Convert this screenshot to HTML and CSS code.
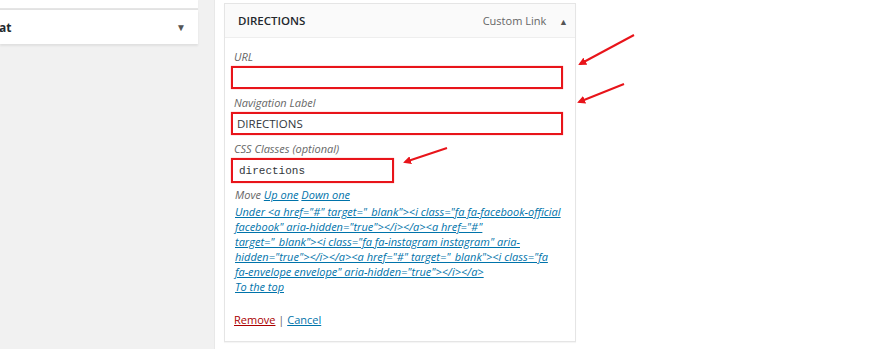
FILE: index.html
```html
<!DOCTYPE html>
<html>
<head>
	<meta charset="utf-8">
	<title>Menu item - Directions</title>
	<link rel="stylesheet" href="styles.css">
</head>
<body>
	<div class="page">
		<div class="side">
			<div class="box box-top"></div>
			<div class="box box-item">
				<span class="box-title">at</span>
				<span class="toggle">&#9660;</span>
			</div>
		</div>

		<div class="main">
			<div class="item">
				<div class="item-head">
					<span class="item-title">DIRECTIONS</span>
					<span class="item-type">Custom Link <span class="toggle up">&#9650;</span></span>
				</div>
				<div class="item-body">
					<label class="field">
						<span class="field-label">URL</span>
						<input class="mark wide" type="text" value="">
					</label>
					<label class="field">
						<span class="field-label">Navigation Label</span>
						<input class="mark wide" type="text" value="DIRECTIONS">
					</label>
					<label class="field">
						<span class="field-label">CSS Classes (optional)</span>
						<input class="mark short code" type="text" value="directions">
					</label>

					<div class="move">
						<div class="move-row">Move <a href="#">Up one</a> <a href="#">Down one</a></div>
						<a href="#" class="under">Under &lt;a href="#" target="_blank"&gt;&lt;i class="fa fa-facebook-official<br>facebook" aria-hidden="true"&gt;&lt;/i&gt;&lt;/a&gt;&lt;a href="#"<br>target="_blank"&gt;&lt;i class="fa fa-instagram instagram" aria-<br>hidden="true"&gt;&lt;/i&gt;&lt;/a&gt;&lt;a href="#" target="_blank"&gt;&lt;i class="fa<br>fa-envelope envelope" aria-hidden="true"&gt;&lt;/i&gt;&lt;/a&gt;</a><br>
						<a href="#">To the top</a>
					</div>

					<div class="actions">
						<a href="#" class="remove">Remove</a> | <a href="#">Cancel</a>
					</div>
				</div>
			</div>
		</div>
	</div>

	<!-- red arrows drawn over the screenshot -->
	<svg class="arrows" width="880" height="349" viewBox="0 0 880 349">
		<defs>
			<marker id="head" markerWidth="8" markerHeight="8" refX="6" refY="4" orient="auto" markerUnits="userSpaceOnUse">
				<path d="M0,0 L8,4 L0,8 Z" fill="#e8141a"/>
			</marker>
		</defs>
		<line x1="634" y1="35" x2="580" y2="64" stroke="#e8141a" stroke-width="2" marker-end="url(#head)"/>
		<line x1="624" y1="84" x2="579" y2="102" stroke="#e8141a" stroke-width="2" marker-end="url(#head)"/>
		<line x1="447" y1="148" x2="405" y2="162" stroke="#e8141a" stroke-width="2" marker-end="url(#head)"/>
	</svg>
</body>
</html>
```

FILE: styles.css
```css
body{
	margin: 0;
	background-color: #fff;
	font-family: "Open Sans", "Noto Sans", sans-serif;
	color: #23282d;
}
.page{
	display: flex;
	height: 349px;
}
.side{
	width: 214px;
	background-color: #f1f1f1;
	border-right: 1px solid #e8e8e8;
}
.box{
	width: 198px;
	background-color: #fff;
	box-shadow: 0 1px 1px rgba(0,0,0,0.06);
}
.box-top{
	height: 8px;
	border-bottom: 1px solid #e5e5e5;
}
.box-item{
	height: 34px;
	margin-top: 1px;
	display: flex;
	align-items: center;
	justify-content: space-between;
	box-shadow: 0 2px 2px rgba(0,0,0,0.07);
}
.box-title{
	font-weight: 700;
	font-size: 12px;
	margin-left: -1px;
}
.toggle{
	font-size: 10px;
	color: #555;
	margin-right: 12px;
}
.main{
	flex: 1;
	padding: 3px 0 0 9px;
}
.item{
	width: 350px;
	border: 1px solid #e5e5e5;
	box-shadow: 0 1px 1px rgba(0,0,0,0.04);
	background-color: #fff;
}
.item-head{
	height: 33px;
	background-color: #fafafa;
	border-bottom: 1px solid #eee;
	display: flex;
	align-items: center;
	justify-content: space-between;
	padding-left: 13px;
}
.item-title{
	font-size: 11.5px;
	font-weight: 600;
}
.item-type{
	font-size: 11px;
	color: #666;
}
.item-type .toggle{
	margin-left: 10px;
	margin-right: 7px;
	font-size: 9px;
}
.item-body{
	padding: 12px 0 14px 6px;
}
.field{
	display: block;
	margin-bottom: 7px;
}
.field-label{
	display: block;
	font-size: 11px;
	line-height: 14px;
	font-style: italic;
	color: #666;
	padding-left: 3px;
	margin-bottom: 2px;
}
.mark{
	display: block;
	box-sizing: border-box;
	border: 2px solid #e8141a;
	box-shadow: 0 0 1px #f77;
	background-color: #fff;
	font-family: "Open Sans", "Noto Sans", sans-serif;
	font-size: 11.5px;
	color: #32373c;
	padding: 0 4px;
	margin: 0;
	outline: none;
}
.wide{
	width: 332px;
	height: 23px;
}
.short{
	width: 163px;
	height: 25px;
}
.code{
	font-family: "Liberation Mono", "DejaVu Sans Mono", monospace;
	font-size: 11px;
	padding-left: 6px;
}
.move{
	padding-left: 4px;
	font-size: 11px;
	font-style: italic;
	color: #666;
	line-height: 15px;
	margin-top: -3px;
	white-space: nowrap;
}
.move-row{
	margin-bottom: 2px;
}
.move a, .actions a{
	color: #0073aa;
	text-decoration: underline;
}
.actions{
	margin-top: 18px;
	padding-left: 3px;
	font-size: 11px;
	line-height: 15px;
	color: #666;
}
.actions .remove{
	color: #a00;
}
.arrows{
	position: absolute;
	left: 0;
	top: 0;
	pointer-events: none;
}
```
